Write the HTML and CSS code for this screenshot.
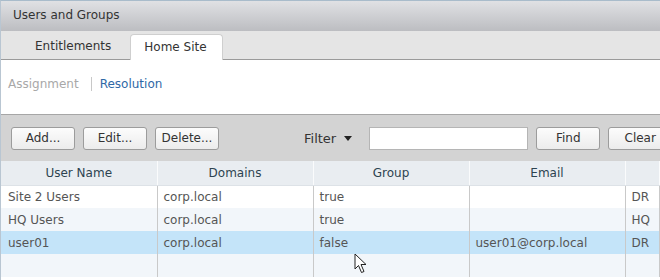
FILE: index.html
```html
<!DOCTYPE html>
<html lang="en">
<head>
  <meta charset="UTF-8" />
  <title>Users and Groups</title>
  <link rel="stylesheet" href="styles.css">
</head>
<body>
  <div class="window">
    <div class="titlebar">Users and Groups</div>

    <!-- Tabs -->
    <div class="tabs">
      <div class="tab">Entitlements</div>
      <div class="tab active">Home Site</div>
    </div>

    <div class="subnav">
      <span class="subnav-item muted">Assignment</span>
      <span class="subnav-sep"></span>
      <span class="subnav-item link">Resolution</span>
    </div>

    <!-- Toolbar -->
    <div class="toolbar">
      <button class="btn">Add...</button>
      <button class="btn">Edit...</button>
      <button class="btn">Delete...</button>
      <div class="filter">Filter <span class="caret"></span></div>
      <input class="filter-input" type="text" />
      <button class="btn">Find</button>
      <button class="btn">Clear</button>
    </div>

    <!-- Grid -->
    <table class="grid">
      <colgroup>
        <col style="width:156px">
        <col style="width:156px">
        <col style="width:156px">
        <col style="width:156px">
        <col>
      </colgroup>
      <thead>
        <tr>
          <th>User Name</th>
          <th>Domains</th>
          <th>Group</th>
          <th>Email</th>
          <th></th>
        </tr>
      </thead>
      <tbody>
        <tr>
          <td>Site 2 Users</td><td>corp.local</td><td>true</td><td></td><td>DR</td>
        </tr>
        <tr class="alt">
          <td>HQ Users</td><td>corp.local</td><td>true</td><td></td><td>HQ</td>
        </tr>
        <tr class="selected">
          <td>user01</td><td>corp.local</td><td>false</td><td>user01@corp.local</td><td>DR</td>
        </tr>
        <tr class="alt">
          <td></td><td></td><td></td><td></td><td></td>
        </tr>
      </tbody>
    </table>

    <!-- Mouse pointer -->
    <svg class="cursor" width="14" height="22" viewBox="0 0 14 22">
      <path d="M1 1 L1 16 L4.5 12.5 L7.5 19.5 L10 18.5 L7 11.5 L12 11.5 Z" fill="#fff" stroke="#222" stroke-width="1" stroke-linejoin="round" />
    </svg>
  </div>
</body>
</html>
```

FILE: styles.css
```css
* {
  box-sizing: border-box;
  margin: 0;
  padding: 0;
}

body, html {
  height: 100%;
  overflow: hidden;
  background: #fff;
  font-family: "DejaVu Sans", Verdana, sans-serif;
  font-size: 12px;
  color: #333;
}

.window {
  position: relative;
  height: 100%;
  overflow: hidden;
  border-left: 1px solid #b9c6d2;
  border-top: 1px solid #a9bccb;
}

.titlebar {
  height: 30px;
  line-height: 29px;
  padding-left: 12px;
  background: linear-gradient(#e0e1e4, #bcbdc1);
  color: #333;
}

/* Tabs */
.tabs {
  display: flex;
  align-items: flex-end;
  height: 29px;
  padding-left: 19px;
  background: #e5e5e5;
  border-bottom: 1px solid #9a9a9a;
}

.tab {
  padding: 0 15px;
  height: 25px;
  line-height: 24px;
  margin-right: 4px;
  color: #333;
}

.tab.active {
  background: #fff;
  border: 1px solid #cfcfcf;
  border-bottom: none;
  border-radius: 4px 4px 0 0;
  height: 26px;
  margin-bottom: -1px;
  padding: 0 15px 0 13px;
}

.subnav {
  display: flex;
  align-items: center;
  height: 54px;
  padding: 0 0 6px 7px;
}

.subnav-item.muted { color: #a8a8a8; }
.subnav-item.link { color: #2f68a6; }

.subnav-sep {
  width: 1px;
  height: 14px;
  background: #c8c8c8;
  margin: 0 8px 0 12px;
}

/* Toolbar */
.toolbar {
  display: flex;
  align-items: center;
  height: 47px;
  padding: 0 0 0 10px;
  background: #d3d3d3;
  border-top: 1px solid #a6a6a6;
  white-space: nowrap;
}

.btn {
  flex-shrink: 0;
  height: 23px;
  width: 64px;
  padding: 0;
  margin-right: 8px;
  font: inherit;
  color: #333;
  background: linear-gradient(#fcfcfc, #ececec);
  border: 1px solid #9c9c9c;
  border-radius: 3px;
}

.filter {
  display: flex;
  align-items: center;
  margin: 0 17px 0 77px;
  font-size: 13px;
  color: #333;
}

.caret {
  width: 0;
  height: 0;
  margin-left: 8px;
  border-left: 4px solid transparent;
  border-right: 4px solid transparent;
  border-top: 5px solid #222;
}

.filter-input {
  flex-shrink: 0;
  width: 159px;
  height: 23px;
  margin-right: 8px;
  border: 1px solid #b5b5b5;
  background: #fff;
}

/* Grid */
.grid {
  width: 100%;
  border-collapse: collapse;
  table-layout: fixed;
}

.grid th {
  height: 24px;
  font-weight: normal;
  color: #2d4350;
  background: #e9edf1;
  border-right: 1px solid #fafbfc;
  border-bottom: 1px solid #dde2e7;
}

.grid td {
  height: 23px;
  padding-left: 6px;
  color: #555;
  border-right: 1px solid #c9c9c9;
  white-space: nowrap;
  overflow: hidden;
}

.grid td:first-child { padding-left: 7px; }

.grid tr.alt td { background: #f2f6fa; }
.grid tr.selected td { background: #c4e4f9; }

.cursor {
  position: absolute;
  left: 353px;
  top: 252px;
}
```
